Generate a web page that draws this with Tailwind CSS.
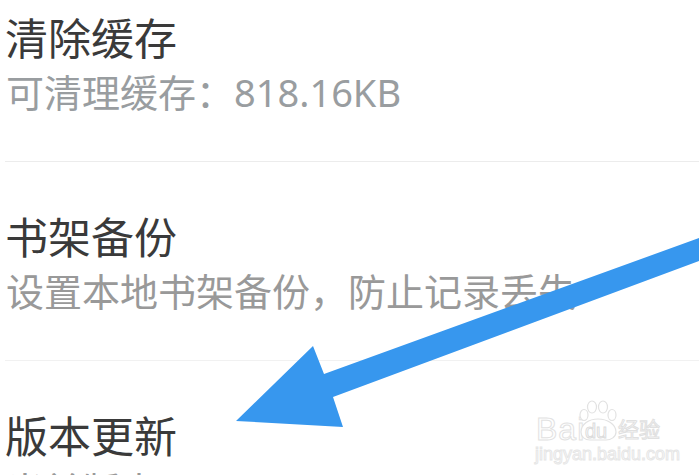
<!doctype html>
<html lang="zh-CN"><head><meta charset="utf-8"><script src="https://cdn.jsdelivr.net/npm/@tailwindcss/browser@4"></script></head>
<body class="m-0 bg-white">
<div class="relative w-[699px] h-[475px] overflow-hidden bg-white pl-[5px] font-['Noto_Sans','Noto_Sans_CJK_SC',sans-serif]">
  <section class="pt-[13px] pb-[46px] border-b border-[#ececec]">
    <h2 class="text-[43px] leading-[52px] font-normal text-[#3a3a3a]">清除缓存</h2>
    <p class="mt-[5px] pl-[1px] text-[38px] leading-[45px] text-[#999da0] whitespace-nowrap">可清理缓存：818.16KB</p>
  </section>
  <section class="pt-[50px] pb-[46px] border-b border-[#f1f1f1]">
    <h2 class="text-[43px] leading-[52px] font-normal text-[#3a3a3a]">书架备份</h2>
    <p class="mt-[5px] pl-[1px] text-[38px] leading-[45px] text-[#999] whitespace-nowrap">设置本地书架备份，防止记录丢失</p>
  </section>
  <section class="pt-[50px]">
    <h2 class="text-[43px] leading-[52px] font-normal text-[#3a3a3a]">版本更新</h2>
    <p class="mt-[5px] pl-[1px] text-[38px] leading-[45px] text-[#999] whitespace-nowrap">当前版本</p>
  </section>
  <svg class="absolute left-0 top-0" width="699" height="475" viewBox="0 0 699 475">
    <polygon fill="#3797ee" points="236,421 313,346 324,374 699,238 699,261 333,397 343,427"/>
  </svg>
  <div class="absolute left-[535px] top-[400px] w-[130px] h-[62px]">
    <span class="absolute left-[1px] top-[15px] text-[32px] leading-[28px] text-white [-webkit-text-stroke:1px_#e2e2e2] font-['Liberation_Sans',sans-serif] tracking-[1px]">Bai</span>
    <svg class="absolute left-[42px] top-0" width="42" height="42" viewBox="0 0 42 42" fill="#fff" stroke="#e2e2e2" stroke-width="1.2">
      <ellipse cx="7" cy="15" rx="4" ry="5.5"/><ellipse cx="15" cy="7" rx="4.5" ry="6"/><ellipse cx="26" cy="7" rx="4.5" ry="6"/><ellipse cx="35" cy="15" rx="4" ry="5.5"/>
      <path d="M4 32c0-8 8-13 17-13s18 5 18 13c0 5-5 8-10 8H13c-5 0-9-3-9-8z"/>
    </svg>
    <span class="absolute left-[50px] top-[20px] text-[20px] leading-[22px] text-white [-webkit-text-stroke:1px_#dcdcdc] font-['Liberation_Sans',sans-serif]">du</span>
    <span class="absolute left-[83px] top-[15px] text-[21px] leading-[28px] text-white [-webkit-text-stroke:1px_#e0e0e0] whitespace-nowrap">经验</span>
    <span class="absolute left-0 top-[44px] text-[18px] leading-[20px] text-white [-webkit-text-stroke:1px_#e6e6e6] whitespace-nowrap font-['Liberation_Sans',sans-serif]">jingyan.baidu.com</span>
  </div>
</div>
</body></html>
